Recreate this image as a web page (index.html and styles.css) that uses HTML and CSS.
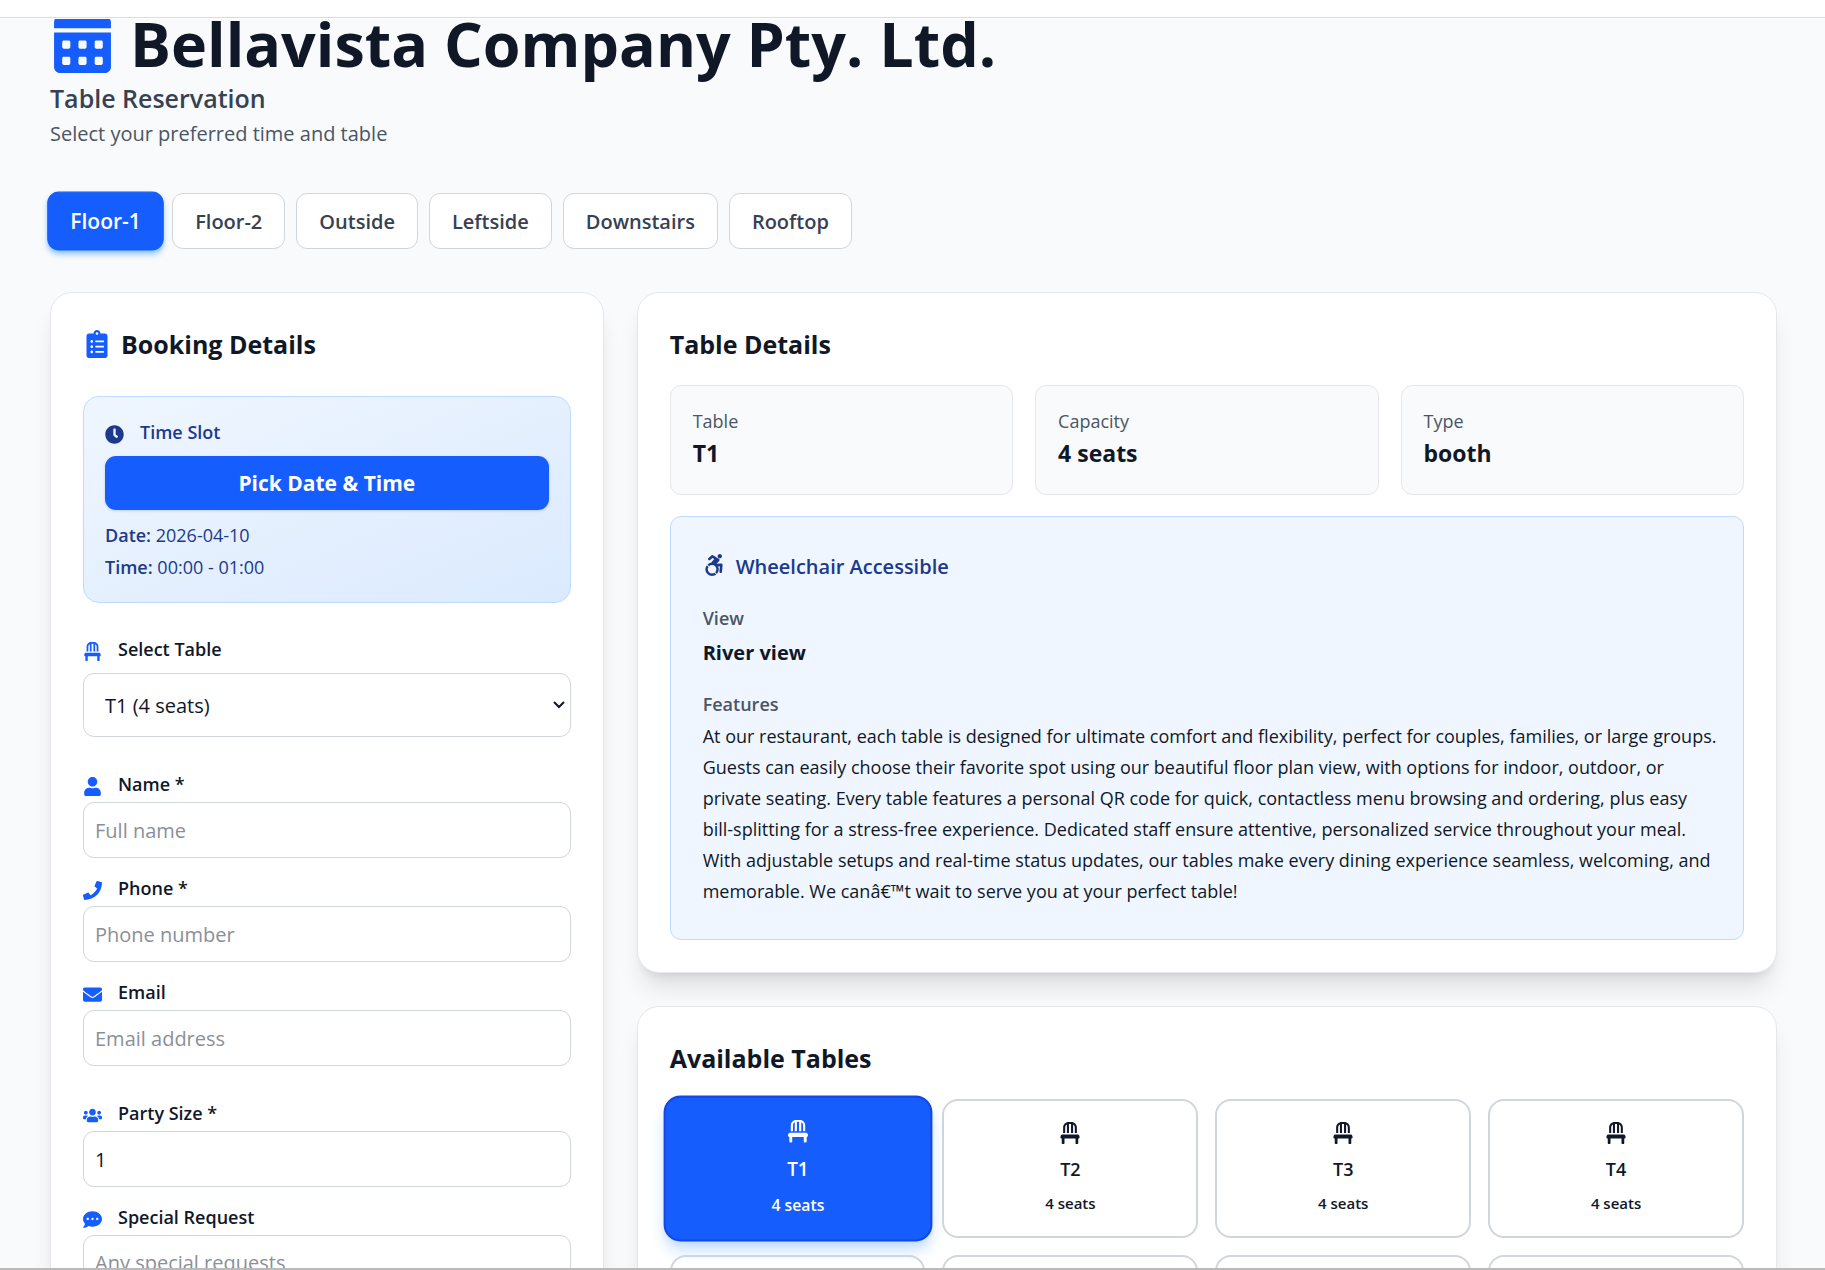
FILE: index.html
```html
<!DOCTYPE html>
<html lang="en">
<head>
  <meta charset="UTF-8" />
  <meta name="viewport" content="width=device-width, initial-scale=1.0" />
  <title>Table Reservation</title>
  <link rel="stylesheet" href="styles.css">
</head>
<body>
  <svg class="sprite" aria-hidden="true">
    <symbol id="i-calendar" viewBox="0 0 448 512"><path d="M0 464c0 26.500 21.500 48 48 48h352c26.500 0 48-21.500 48-48V192H0v272zm320-196c0-6.600 5.400-12 12-12h40c6.600 0 12 5.400 12 12v40c0 6.600-5.400 12-12 12h-40c-6.600 0-12-5.400-12-12v-40zm0 128c0-6.600 5.400-12 12-12h40c6.600 0 12 5.400 12 12v40c0 6.600-5.400 12-12 12h-40c-6.600 0-12-5.400-12-12v-40zM192 268c0-6.600 5.400-12 12-12h40c6.600 0 12 5.400 12 12v40c0 6.600-5.400 12-12 12h-40c-6.600 0-12-5.400-12-12v-40zm0 128c0-6.600 5.400-12 12-12h40c6.600 0 12 5.400 12 12v40c0 6.600-5.400 12-12 12h-40c-6.600 0-12-5.400-12-12v-40zM64 268c0-6.600 5.400-12 12-12h40c6.600 0 12 5.400 12 12v40c0 6.600-5.400 12-12 12H76c-6.600 0-12-5.400-12-12v-40zm0 128c0-6.600 5.400-12 12-12h40c6.600 0 12 5.400 12 12v40c0 6.600-5.400 12-12 12H76c-6.600 0-12-5.400-12-12v-40zM400 64h-48V16c0-8.800-7.200-16-16-16h-32c-8.800 0-16 7.200-16 16v48H160V16c0-8.800-7.200-16-16-16h-32c-8.800 0-16 7.200-16 16v48H48C21.500 64 0 85.500 0 112v48h448v-48c0-26.500-21.500-48-48-48z"/></symbol>
    <symbol id="i-clipboard" viewBox="0 0 384 512"><path d="M336 64h-80c0-35.300-28.700-64-64-64s-64 28.700-64 64H48C21.500 64 0 85.500 0 112v352c0 26.500 21.500 48 48 48h288c26.500 0 48-21.500 48-48V112c0-26.500-21.500-48-48-48zM96 424c-13.300 0-24-10.700-24-24s10.700-24 24-24 24 10.700 24 24-10.700 24-24 24zm0-96c-13.300 0-24-10.700-24-24s10.700-24 24-24 24 10.700 24 24-10.700 24-24 24zm0-96c-13.300 0-24-10.700-24-24s10.700-24 24-24 24 10.700 24 24-10.700 24-24 24zm96-192c13.300 0 24 10.700 24 24s-10.700 24-24 24-24-10.700-24-24 10.700-24 24-24zm128 368c0 4.400-3.600 8-8 8H168c-4.400 0-8-3.600-8-8v-16c0-4.400 3.600-8 8-8h144c4.400 0 8 3.600 8 8v16zm0-96c0 4.400-3.600 8-8 8H168c-4.400 0-8-3.600-8-8v-16c0-4.400 3.600-8 8-8h144c4.400 0 8 3.600 8 8v16zm0-96c0 4.400-3.600 8-8 8H168c-4.400 0-8-3.600-8-8v-16c0-4.400 3.600-8 8-8h144c4.400 0 8 3.600 8 8v16z"/></symbol>
    <symbol id="i-clock" viewBox="0 0 512 512"><path d="M256,8C119,8,8,119,8,256S119,504,256,504,504,393,504,256,393,8,256,8Zm92.490,313h0l-20,25a16,16,0,0,1-22.490,2.500h0l-67-49.720a40,40,0,0,1-15-31.230V112a16,16,0,0,1,16-16h32a16,16,0,0,1,16,16V256l58,42.500A16,16,0,0,1,348.490,321Z"/></symbol>
    <symbol id="i-chair" viewBox="0 0 448 512"><path d="M112 128c0-29.500 16.200-55 40-68.900V256h48V48h48v208h48V59.100c23.800 13.900 40 39.400 40 68.900v128h48V128C384 57.300 326.700 0 256 0h-64C121.300 0 64 57.300 64 128v128h48zm334.300 213.900l-10.700-32c-4.400-13.100-16.600-21.900-30.400-21.900H42.700c-13.800 0-26 8.800-30.400 21.900l-10.700 32C-5.200 362.600 10.200 384 32 384v112c0 8.800 7.200 16 16 16h32c8.800 0 16-7.200 16-16V384h256v112c0 8.800 7.200 16 16 16h32c8.800 0 16-7.200 16-16V384c21.800 0 37.200-21.400 30.300-42.100z"/></symbol>
    <symbol id="i-user" viewBox="0 0 448 512"><path d="M224 256c70.700 0 128-57.300 128-128S294.700 0 224 0 96 57.300 96 128s57.300 128 128 128zm89.600 32h-16.700c-22.200 10.200-46.900 16-72.900 16s-50.600-5.800-72.900-16h-16.700C60.200 288 0 348.200 0 422.400V464c0 26.500 21.500 48 48 48h352c26.500 0 48-21.500 48-48v-41.600c0-74.200-60.200-134.400-134.400-134.400z"/></symbol>
    <symbol id="i-phone" viewBox="0 0 512 512"><path d="M493.400 24.600l-104-24c-11.300-2.600-22.900 3.300-27.500 13.900l-48 112c-4.200 9.800-1.400 21.300 6.900 28l60.600 49.600c-36 76.700-98.900 140.500-177.200 177.200l-49.600-60.600c-6.800-8.300-18.200-11.100-28-6.900l-112 48C3.900 366.500-2 378.100.6 389.400l24 104C27.100 504.200 36.700 512 48 512c256.100 0 464-207.500 464-464 0-11.200-7.700-20.900-18.600-23.400z"/></symbol>
    <symbol id="i-envelope" viewBox="0 0 512 512"><path d="M502.300 190.800c3.900-3.100 9.700-.2 9.700 4.700V400c0 26.500-21.500 48-48 48H48c-26.500 0-48-21.500-48-48V195.600c0-5 5.700-7.800 9.700-4.700 22.400 17.400 52.100 39.500 154.100 113.600 21.100 15.400 56.700 47.800 92.200 47.600 35.700.3 72-32.800 92.300-47.600 102-74.100 131.600-96.300 154-113.700zM256 320c23.200.4 56.600-29.200 73.400-41.400 132.700-96.300 142.800-104.700 173.400-128.700 5.800-4.500 9.200-11.500 9.200-18.900v-19c0-26.500-21.500-48-48-48H48c-26.500 0-48 21.500-48 48v19c0 7.400 3.400 14.300 9.200 18.900 30.600 23.900 40.700 32.400 173.400 128.700 16.800 12.200 50.200 41.800 73.400 41.400z"/></symbol>
    <symbol id="i-users" viewBox="0 0 640 512"><path d="M96 224c35.300 0 64-28.700 64-64s-28.700-64-64-64-64 28.700-64 64 28.700 64 64 64zm448 0c35.300 0 64-28.700 64-64s-28.700-64-64-64-64 28.700-64 64 28.700 64 64 64zm32 32h-64c-17.600 0-33.500 7.100-45.100 18.600 40.300 22.100 68.900 62 75.100 109.400h66c17.700 0 32-14.300 32-32v-32c0-35.300-28.700-64-64-64zm-256 0c61.900 0 112-50.100 112-112S381.900 32 320 32 208 82.100 208 144s50.100 112 112 112zm76.800 32h-8.300c-20.800 10-43.900 16-68.500 16s-47.600-6-68.500-16h-8.300C179.600 288 128 339.600 128 403.200V432c0 26.500 21.500 48 48 48h288c26.500 0 48-21.500 48-48v-28.800c0-63.600-51.600-115.200-115.200-115.200zm-223.700-13.400C161.500 263.100 145.600 256 128 256H64c-35.300 0-64 28.700-64 64v32c0 17.700 14.300 32 32 32h65.900c6.300-47.400 34.900-87.300 75.200-109.400z"/></symbol>
    <symbol id="i-comment" viewBox="0 0 512 512"><path d="M256 32C114.600 32 0 125.100 0 240c0 49.600 21.400 95 57 130.700C44.500 421.100 2.700 466 2.200 466.500c-2.200 2.300-2.800 5.700-1.500 8.700S4.800 480 8 480c66.300 0 116-31.800 140.600-51.400 32.700 12.300 69 19.400 107.400 19.400 141.400 0 256-93.100 256-208S397.400 32 256 32zM128 272c-17.700 0-32-14.300-32-32s14.300-32 32-32 32 14.300 32 32-14.300 32-32 32zm128 0c-17.700 0-32-14.300-32-32s14.300-32 32-32 32 14.300 32 32-14.300 32-32 32zm128 0c-17.700 0-32-14.300-32-32s14.300-32 32-32 32 14.300 32 32-14.300 32-32 32z"/></symbol>
    <symbol id="i-accessible" viewBox="0 0 448 512"><path d="M423.900 255.800L411 413.100c-3.300 40.700-63.900 35.100-60.600-4.900l10-122.500-41.100 2.300c10.100 20.700 15.800 43.900 15.800 68.500 0 41.200-16.100 78.700-42.300 106.500l-39.300-39.300c57.900-63.700 13.100-167.200-74-167.200-25.900 0-49.500 9.900-67.200 26L73 243.200c22-20.700 50.100-35.100 81.400-40.200l75.300-85.700-42.600-24.800-51.600 46c-30 26.800-70.600-18.500-40.500-45.400l68-60.700c9.800-8.800 24.100-10.200 35.500-3.600 0 0 139.300 80.900 139.500 81.100 16.200 10.100 20.700 36 6.100 52.600L285.700 229l106.100-5.900c18.500-1.100 33.600 14.400 32.100 32.700zm-64.900-154c28.100 0 50.900-22.800 50.900-50.900C409.900 22.800 387.100 0 359 0c-28.100 0-50.900 22.800-50.900 50.900 0 28.100 22.800 50.900 50.900 50.900zM179.600 456.500c-80.600 0-127.400-90.600-82.700-156.100l-39.700-39.700C36.400 287 24 320.300 24 356.400c0 130.700 150.700 201.400 251.400 122.500l-39.700-39.700c-16 10.900-35.300 17.300-56.100 17.300z"/></symbol>
  </svg>

  <div class="topbar"></div>

  <main class="page">
    <header class="page-header">
      <h1><svg class="icon"><use href="#i-calendar"/></svg>Bellavista Company Pty. Ltd.</h1>
      <p class="subtitle">Table Reservation</p>
      <p class="hint">Select your preferred time and table</p>
    </header>

    <nav class="floors">
      <button type="button" class="floor active">Floor-1</button>
      <button type="button" class="floor">Floor-2</button>
      <button type="button" class="floor">Outside</button>
      <button type="button" class="floor">Leftside</button>
      <button type="button" class="floor">Downstairs</button>
      <button type="button" class="floor">Rooftop</button>
    </nav>

    <div class="layout">
      <form class="card booking">
        <h2><svg class="icon"><use href="#i-clipboard"/></svg>Booking Details</h2>

        <div class="timeslot">
          <p class="label"><svg class="icon"><use href="#i-clock"/></svg>Time Slot</p>
          <button type="button" class="pick">Pick Date &amp; Time</button>
          <p class="slot-line"><strong>Date:</strong> 2026-04-10</p>
          <p class="slot-line"><strong>Time:</strong> 00:00 - 01:00</p>
        </div>

        <div class="group">
          <div class="field field-select">
            <label class="label" for="table"><svg class="icon"><use href="#i-chair"/></svg>Select Table</label>
            <div class="select-wrap">
              <select id="table">
                <option>T1 (4 seats)</option>
                <option>T2 (4 seats)</option>
                <option>T3 (4 seats)</option>
                <option>T4 (4 seats)</option>
              </select>
              <svg class="chevron" viewBox="0 0 12 8"><path d="M1 1l5 5 5-5"/></svg>
            </div>
          </div>
        </div>

        <div class="group">
          <div class="field">
            <label class="label" for="name"><svg class="icon"><use href="#i-user"/></svg>Name *</label>
            <input type="text" id="name" placeholder="Full name" />
          </div>
          <div class="field">
            <label class="label" for="phone"><svg class="icon"><use href="#i-phone"/></svg>Phone *</label>
            <input type="tel" id="phone" placeholder="Phone number" />
          </div>
          <div class="field">
            <label class="label" for="email"><svg class="icon"><use href="#i-envelope"/></svg>Email</label>
            <input type="email" id="email" placeholder="Email address" />
          </div>
        </div>

        <div class="group">
          <div class="field">
            <label class="label" for="party"><svg class="icon"><use href="#i-users"/></svg>Party Size *</label>
            <input type="number" id="party" value="1" min="1" />
          </div>
          <div class="field">
            <label class="label" for="request"><svg class="icon"><use href="#i-comment"/></svg>Special Request</label>
            <textarea id="request" rows="3" placeholder="Any special requests"></textarea>
          </div>
        </div>
      </form>

      <div class="column">
        <section class="card">
          <h2>Table Details</h2>
          <div class="facts">
            <div class="fact">
              <p class="fact-name">Table</p>
              <p class="fact-value">T1</p>
            </div>
            <div class="fact">
              <p class="fact-name">Capacity</p>
              <p class="fact-value">4 seats</p>
            </div>
            <div class="fact">
              <p class="fact-name">Type</p>
              <p class="fact-value">booth</p>
            </div>
          </div>
          <div class="about">
            <p class="accessible"><svg class="icon"><use href="#i-accessible"/></svg>Wheelchair Accessible</p>
            <h3>View</h3>
            <p class="view">River view</p>
            <h3>Features</h3>
            <p class="features">At our restaurant, each table is designed for ultimate comfort and flexibility, perfect for couples, families, or large groups. Guests can easily choose their favorite spot using our beautiful floor plan view, with options for indoor, outdoor, or private seating. Every table features a personal QR code for quick, contactless menu browsing and ordering, plus easy bill-splitting for a stress-free experience. Dedicated staff ensure attentive, personalized service throughout your meal. With adjustable setups and real-time status updates, our tables make every dining experience seamless, welcoming, and memorable. We canâ€™t wait to serve you at your perfect table!</p>
          </div>
        </section>

        <section class="card">
          <h2>Available Tables</h2>
          <div class="tables">
            <button type="button" class="table active"><svg class="icon"><use href="#i-chair"/></svg><span class="table-name">T1</span><span class="table-seats">4 seats</span></button>
            <button type="button" class="table"><svg class="icon"><use href="#i-chair"/></svg><span class="table-name">T2</span><span class="table-seats">4 seats</span></button>
            <button type="button" class="table"><svg class="icon"><use href="#i-chair"/></svg><span class="table-name">T3</span><span class="table-seats">4 seats</span></button>
            <button type="button" class="table"><svg class="icon"><use href="#i-chair"/></svg><span class="table-name">T4</span><span class="table-seats">4 seats</span></button>
            <button type="button" class="table" aria-label="T5"></button>
            <button type="button" class="table" aria-label="T6"></button>
            <button type="button" class="table" aria-label="T7"></button>
            <button type="button" class="table" aria-label="T8"></button>
          </div>
        </section>
      </div>
    </div>
  </main>

  <div class="bottombar"></div>
</body>
</html>
```

FILE: styles.css
```css
* {
  box-sizing: border-box;
}
body {
  margin: 0;
  height: 100vh;
  overflow: hidden;
  background: #f9fafb;
  color: #101828;
  font-family: "Open Sans", "Noto Sans", sans-serif;
  font-size: 18px;
}
h1, h2, h3, p {
  margin: 0;
}
button, input, select, textarea {
  font: inherit;
  color: inherit;
}
.sprite {
  position: absolute;
  width: 0;
  height: 0;
}
.icon {
  fill: currentColor;
}
.topbar {
  position: fixed;
  top: 0;
  left: 0;
  right: 0;
  height: 18px;
  background: #fff;
  border-bottom: 1px solid #dcdcdc;
  box-shadow: 0 1px #fff;
  z-index: 10;
}
.bottombar {
  position: fixed;
  bottom: 0;
  left: 0;
  right: 0;
  height: 2px;
  background: #bababa;
  z-index: 10;
}
.page {
  padding: 8px 48px 50px 50px;
}

/* header */
h1 {
  font-size: 61px;
  line-height: 70px;
  font-weight: 700;
}
h1 .icon {
  width: 65px;
  height: 65px;
  margin-right: 15px;
  vertical-align: -6px;
  color: #155dfc;
}
.subtitle {
  font-size: 25px;
  line-height: 38px;
  font-weight: 600;
  color: #364153;
}
.hint {
  font-size: 20px;
  line-height: 34px;
  color: #4a5565;
}

/* floor tabs */
.floors {
  display: flex;
  gap: 11px;
  margin: 42px 0 43px;
}
.floor {
  height: 56px;
  padding: 0 21px;
  background: #fff;
  border: 1px solid #d1d5dc;
  border-radius: 11px;
  font-size: 20px;
  font-weight: 600;
  color: #364153;
  cursor: pointer;
}
.floor + .floor {
  padding: 0 22px;
}
.floor.active {
  background: #155dfc;
  border-color: #155dfc;
  color: #fff;
  transform: scale(1.05);
  box-shadow: 0 4px 6px -1px #8ec5ff, 0 2px 4px -2px #8ec5ff;
}

/* cards */
.layout {
  display: grid;
  grid-template-columns: repeat(3, 1fr);
  gap: 33px;
  align-items: start;
}
.column {
  grid-column: span 2;
  display: grid;
  gap: 33px;
}
.card {
  padding: 32px;
  background: #fff;
  border: 1px solid #e5e7eb;
  border-radius: 22px;
  box-shadow: 0 20px 25px -5px rgba(0, 0, 0, 0.1), 0 8px 10px -6px rgba(0, 0, 0, 0.1);
}
h2 {
  margin-bottom: 22px;
  font-size: 25px;
  line-height: 38px;
  font-weight: 700;
}
.booking h2 {
  margin-bottom: 33px;
}
h2 .icon {
  width: 28px;
  height: 28px;
  margin-right: 10px;
  vertical-align: -4px;
  color: #155dfc;
}

/* booking form */
.label {
  display: block;
  line-height: 28px;
  font-weight: 600;
}
.label .icon {
  width: 19px;
  height: 19px;
  margin-right: 16px;
  vertical-align: -5px;
  color: #155dfc;
}
.timeslot {
  padding: 21px 21px 19px;
  background: linear-gradient(to bottom right, #eff6ff, #dbeafe);
  border: 1px solid #bedbff;
  border-radius: 16px;
  color: #1c398e;
}
.timeslot .icon {
  color: #1c398e;
}
.pick {
  display: block;
  width: 100%;
  height: 54px;
  margin: 10px 0 9px;
  background: #155dfc;
  border: none;
  border-radius: 11px;
  box-shadow: 0 1px 3px rgba(0, 0, 0, 0.15);
  font-size: 21px;
  font-weight: 700;
  color: #fff;
  cursor: pointer;
}
.slot-line {
  line-height: 32px;
}
.slot-line strong {
  font-weight: 600;
}
.group {
  display: grid;
  gap: 16px;
  margin-top: 32px;
}
.group + .group {
  margin-top: 33px;
}
.field input,
.field select,
.field textarea {
  display: block;
  width: 100%;
  height: 56px;
  margin-top: 4px;
  padding: 0 11px;
  background: #fff;
  border: 1px solid #d1d5dc;
  border-radius: 11px;
  font-size: 20px;
}
.select-wrap {
  position: relative;
}
.field-select select {
  height: 64px;
  margin-top: 10px;
  padding: 0 21px;
  appearance: none;
}
.chevron {
  position: absolute;
  top: 28px;
  right: 6px;
  width: 12px;
  height: 8px;
  fill: none;
  stroke: #101828;
  stroke-width: 2;
  pointer-events: none;
}
.field textarea {
  height: 110px;
  padding: 13px 11px;
  resize: none;
}
.field ::placeholder {
  color: #8b8f99;
}

/* table details */
.facts {
  display: grid;
  grid-template-columns: repeat(3, 1fr);
  gap: 22px;
}
.fact {
  padding: 21px 22px;
  background: #f9fafb;
  border: 1px solid #e5e7eb;
  border-radius: 11px;
}
.fact-name {
  line-height: 28px;
  color: #4a5565;
}
.fact-value {
  padding-bottom: 2px;
  font-size: 23px;
  line-height: 36px;
  font-weight: 700;
}
.about {
  margin-top: 21px;
  padding: 32px 24px 32px 32px;
  background: #eff6ff;
  border: 1px solid #bedbff;
  border-radius: 11px;
}
.accessible {
  margin-bottom: 19px;
  font-size: 20px;
  line-height: 36px;
  font-weight: 600;
  color: #1c398e;
}
.accessible .icon {
  width: 22px;
  height: 22px;
  margin-right: 11px;
  vertical-align: -2px;
}
h3 {
  font-size: 18px;
  line-height: 28px;
  font-weight: 600;
  color: #4a5565;
}
.view {
  margin-bottom: 16px;
  font-size: 20px;
  line-height: 42px;
  font-weight: 700;
}
.features {
  margin-top: 3px;
  line-height: 31px;
}

/* available tables */
.tables {
  display: grid;
  grid-template-columns: repeat(4, 1fr);
  gap: 17px;
}
.table {
  display: flex;
  flex-direction: column;
  align-items: center;
  min-height: 139px;
  padding: 21px;
  background: #fff;
  border: 2px solid #d1d5dc;
  border-radius: 16px;
  font-weight: 600;
  cursor: pointer;
}
.table .icon {
  width: 22px;
  height: 22px;
}
.table-name {
  margin: 11px 0 8px;
  line-height: 28px;
}
.table-seats {
  font-size: 15px;
  line-height: 24px;
}
.table.active {
  z-index: 1;
  background: #155dfc;
  border-color: #1447e6;
  color: #fff;
  transform: scale(1.05);
  box-shadow: 0 10px 15px -3px #bedbff, 0 4px 6px -4px #bedbff;
}
```
